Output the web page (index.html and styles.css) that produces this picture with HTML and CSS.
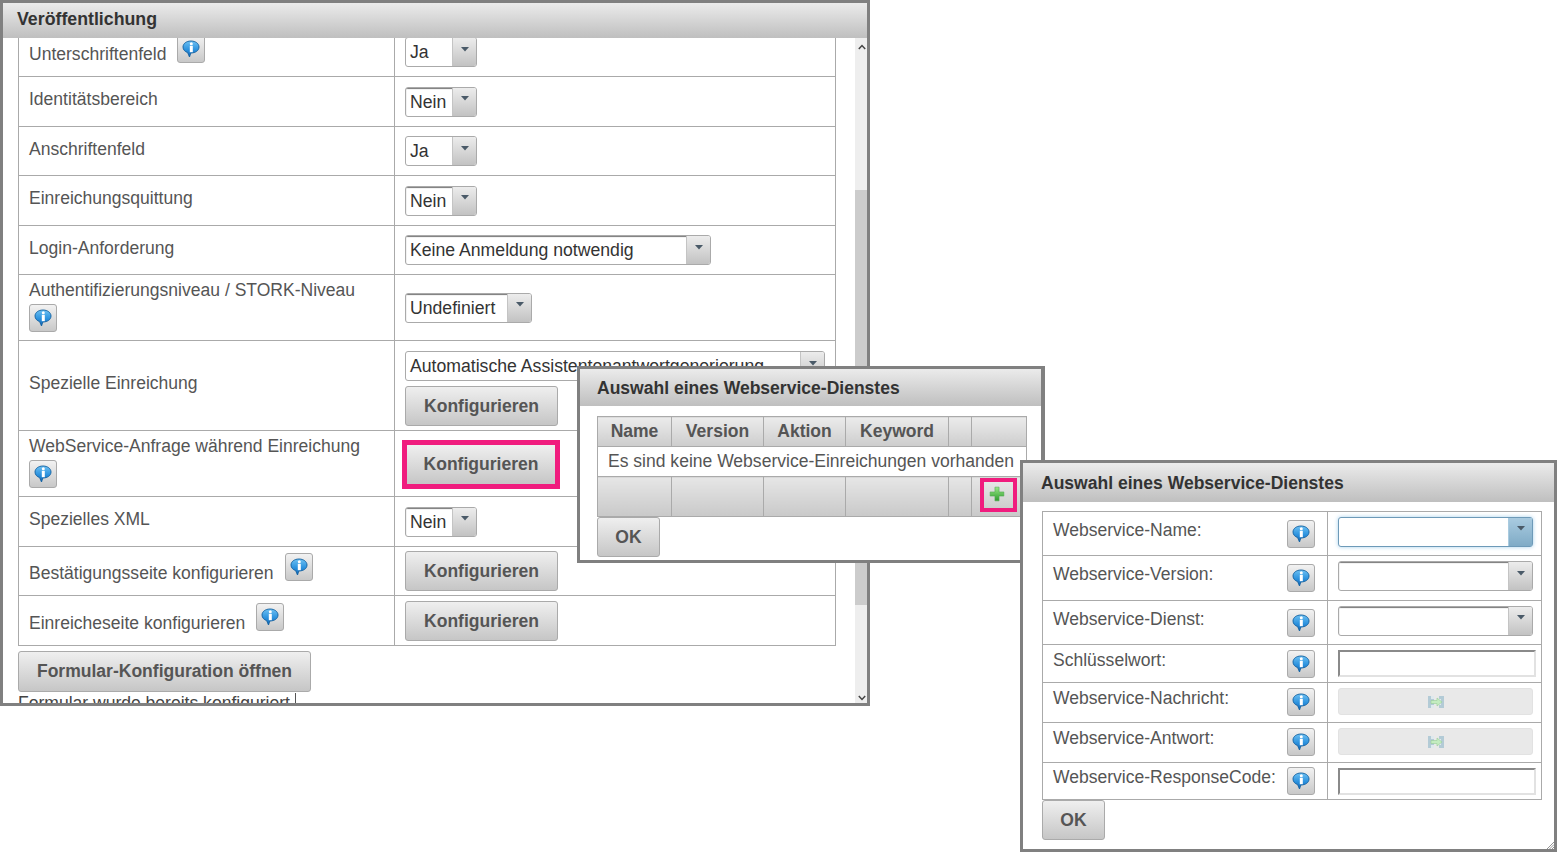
FILE: index.html
```html
<!DOCTYPE html>
<html lang="de">
<head>
<meta charset="utf-8">
<title>Veröffentlichung</title>
<link rel="stylesheet" href="styles.css">
</head>
<body>
<svg class="defs" aria-hidden="true">
  <defs>
    <linearGradient id="bub" x1="0" y1="0" x2="0" y2="1"><stop offset="0" stop-color="#6cc0f2"/><stop offset=".55" stop-color="#2c92de"/><stop offset="1" stop-color="#0e63b4"/></linearGradient>
    <linearGradient id="pl" x1="0" y1="0" x2="0" y2="1"><stop offset="0" stop-color="#9be888"/><stop offset="1" stop-color="#2c9a2c"/></linearGradient>
    <symbol id="info" viewBox="0 0 18 18">
      <path d="M9 1C4.400 1 1 3.600 1 7c0 2.700 2 4.700 4.600 5.600L7.500 17l1.300-4C13.500 13 17 10.600 17 7c0-3.400-3.400-6-8-6z" fill="url(#bub)" stroke="#12609f" stroke-width=".9"/>
      <circle cx="9.300" cy="3.700" r="1.500" fill="#fff"/>
      <rect x="7.800" y="5.800" width="3" height="6.400" fill="#fff"/>
    </symbol>
    <symbol id="plus" viewBox="0 0 14 14">
      <path d="M5.200 1h3.600v4.200H13v3.600H8.800V13H5.200V8.800H1V5.200h4.200z" fill="url(#pl)" stroke="#4da84d" stroke-width=".5"/>
    </symbol>
    <symbol id="transfer" viewBox="0 0 16 14">
      <path d="M0 1h6v12H0zM11 1h5v12h-5z" fill="#b3cbd6"/>
      <path d="M3 1h3v3H3zM3 10h3v3H3zM11 4h2v6h-2z" fill="#dfe9ed"/>
      <path d="M3 5.500h6V3l5 4-5 4V8.500H3z" fill="#c4ecc0" stroke="#98cf95" stroke-width=".6"/>
    </symbol>
    <symbol id="arrow" viewBox="0 0 8 5"><path d="M0 0h8L4 4.500z" fill="#4a5a68"/></symbol>
  </defs>
</svg>

<section class="win win-main">
  <h2 class="win-head">Veröffentlichung</h2>
  <div class="main-body">
    <div class="main-scroll">
      <table class="grid grid-main">
        <colgroup><col class="c-label"><col></colgroup>
        <tr class="h49">
          <td class="lab lab-first">Unterschriftenfeld <span class="info info-up"><svg><use href="#info"/></svg></span></td>
          <td class="val"><span class="combo w72"><span class="cv">Ja</span><span class="ca"><svg><use href="#arrow"/></svg></span></span></td>
        </tr>
        <tr class="h50">
          <td class="lab lab-high">Identitätsbereich</td>
          <td class="val"><span class="combo w72 inset"><span class="cv">Nein</span><span class="ca"><svg><use href="#arrow"/></svg></span></span></td>
        </tr>
        <tr class="h49">
          <td class="lab lab-mid">Anschriftenfeld</td>
          <td class="val"><span class="combo w72"><span class="cv">Ja</span><span class="ca"><svg><use href="#arrow"/></svg></span></span></td>
        </tr>
        <tr class="h50">
          <td class="lab lab-high">Einreichungsquittung</td>
          <td class="val"><span class="combo w72 inset"><span class="cv">Nein</span><span class="ca"><svg><use href="#arrow"/></svg></span></span></td>
        </tr>
        <tr class="h49">
          <td class="lab lab-mid">Login-Anforderung</td>
          <td class="val"><span class="combo w306 inset"><span class="cv">Keine Anmeldung notwendig</span><span class="ca"><svg><use href="#arrow"/></svg></span></span></td>
        </tr>
        <tr class="h66">
          <td class="lab lab-stack">Authentifizierungsniveau / STORK-Niveau<br><span class="info info-block"><svg><use href="#info"/></svg></span></td>
          <td class="val"><span class="combo w127 inset"><span class="cv">Undefiniert</span><span class="ca"><svg><use href="#arrow"/></svg></span></span></td>
        </tr>
        <tr class="h90">
          <td class="lab lab-raise">Spezielle Einreichung</td>
          <td class="val val-stack">
            <span class="combo w420"><span class="cv">Automatische Assistentenantwortgenerierung</span><span class="ca"><svg><use href="#arrow"/></svg></span></span>
            <span class="btn btn-conf btn-stack">Konfigurieren</span>
          </td>
        </tr>
        <tr class="h66">
          <td class="lab lab-stack">WebService-Anfrage während Einreichung<br><span class="info info-block"><svg><use href="#info"/></svg></span></td>
          <td class="val"><span class="mark mark-btn"><span class="btn btn-conf btn-flat">Konfigurieren</span></span></td>
        </tr>
        <tr class="h50">
          <td class="lab lab-high">Spezielles XML</td>
          <td class="val"><span class="combo w72 inset"><span class="cv">Nein</span><span class="ca"><svg><use href="#arrow"/></svg></span></span></td>
        </tr>
        <tr class="h49">
          <td class="lab lab-low">Bestätigungsseite konfigurieren <span class="info info-up2"><svg><use href="#info"/></svg></span></td>
          <td class="val"><span class="btn btn-conf">Konfigurieren</span></td>
        </tr>
        <tr class="h50">
          <td class="lab lab-low">Einreicheseite konfigurieren <span class="info info-up2"><svg><use href="#info"/></svg></span></td>
          <td class="val"><span class="btn btn-conf">Konfigurieren</span></td>
        </tr>
      </table>
      <span class="btn btn-open">Formular-Konfiguration öffnen</span>
      <div class="status">Formular wurde bereits konfiguriert</div>
    </div>
    <div class="scrollbar">
      <div class="sb-top"><svg viewBox="0 0 8 6"><path d="M.8 5 4 1.500 7.200 5" fill="none" stroke="#444" stroke-width="1.500"/></svg></div>
      <div class="sb-thumb"></div>
      <div class="sb-bottom"><svg viewBox="0 0 8 6"><path d="M.8 1 4 4.500 7.200 1" fill="none" stroke="#444" stroke-width="1.500"/></svg></div>
    </div>
  </div>
</section>

<section class="win win-list">
  <h2 class="win-head">Auswahl eines Webservice-Dienstes</h2>
  <div class="list-body">
    <table class="grid grid-list">
      <colgroup><col class="l1"><col class="l2"><col class="l3"><col class="l4"><col class="l5"><col></colgroup>
      <tr class="lh">
        <th>Name</th><th>Version</th><th>Aktion</th><th>Keyword</th><th></th><th></th>
      </tr>
      <tr class="lr"><td colspan="6">Es sind keine Webservice-Einreichungen vorhanden</td></tr>
      <tr class="lf">
        <td></td><td></td><td></td><td></td><td></td>
        <td><span class="mark mark-plus"><svg><use href="#plus"/></svg></span></td>
      </tr>
    </table>
    <span class="btn btn-ok">OK</span>
  </div>
</section>

<section class="win win-form">
  <h2 class="win-head">Auswahl eines Webservice-Dienstes</h2>
  <div class="form-body">
    <table class="grid grid-form">
      <colgroup><col class="f1"><col></colgroup>
      <tr class="r44">
        <td class="flab"><div class="fl"><span>Webservice-Name:</span><span class="info"><svg><use href="#info"/></svg></span></div></td>
        <td class="fval"><span class="combo wf focus"><span class="cv"></span><span class="ca"><svg><use href="#arrow"/></svg></span></span></td>
      </tr>
      <tr class="r45">
        <td class="flab"><div class="fl"><span>Webservice-Version:</span><span class="info"><svg><use href="#info"/></svg></span></div></td>
        <td class="fval"><span class="combo wf inset"><span class="cv"></span><span class="ca"><svg><use href="#arrow"/></svg></span></span></td>
      </tr>
      <tr class="r44">
        <td class="flab"><div class="fl"><span>Webservice-Dienst:</span><span class="info"><svg><use href="#info"/></svg></span></div></td>
        <td class="fval"><span class="combo wf inset"><span class="cv"></span><span class="ca"><svg><use href="#arrow"/></svg></span></span></td>
      </tr>
      <tr class="r38">
        <td class="flab"><div class="fl"><span>Schlüsselwort:</span><span class="info"><svg><use href="#info"/></svg></span></div></td>
        <td class="fval"><span class="tinput"></span></td>
      </tr>
      <tr class="r40">
        <td class="flab"><div class="fl fl-tight"><span>Webservice-Nachricht:</span><span class="info"><svg><use href="#info"/></svg></span></div></td>
        <td class="fval"><span class="disabled"><svg><use href="#transfer"/></svg></span></td>
      </tr>
      <tr class="r40">
        <td class="flab"><div class="fl fl-tight"><span>Webservice-Antwort:</span><span class="info"><svg><use href="#info"/></svg></span></div></td>
        <td class="fval"><span class="disabled"><svg><use href="#transfer"/></svg></span></td>
      </tr>
      <tr class="r37">
        <td class="flab"><div class="fl"><span>Webservice-ResponseCode:</span><span class="info"><svg><use href="#info"/></svg></span></div></td>
        <td class="fval"><span class="tinput"></span></td>
      </tr>
    </table>
    <span class="btn btn-ok">OK</span>
  </div>
  <svg class="grip" viewBox="0 0 8 8"><path d="M8 1 1 8M8 3.500 3.500 8M8 6 6 8" stroke="#777" stroke-width=".8"/></svg>
</section>
</body>
</html>
```

FILE: styles.css
```css
* { box-sizing: border-box; }
html, body { margin: 0; padding: 0; }
body {
  width: 1559px; height: 853px; position: relative; overflow: hidden;
  background: #fff; color: #555;
  font: 17.55px/21px "Liberation Sans", Arial, sans-serif;
}
.defs { position: absolute; width: 0; height: 0; }

/* windows on the canvas */
.win { position: absolute; background: #fff; border: 3px solid #808080; }
.win-main { left: 0; top: 0; width: 870px; height: 706px; display: flex; flex-direction: column; }
.win-list { left: 577px; top: 366px; width: 468px; height: 197px; border-right-width: 4px; }
.win-form { left: 1020px; top: 460px; width: 537px; height: 392px; }
.win-head {
  margin: 0; height: 35px; padding: 5px 14px 0;
  font-size: 17.55px; line-height: 22px; font-weight: bold; color: #333;
  background: linear-gradient(#ebebeb, #bfbfbf);
}
.win-main .win-head { font-size: 17.75px; }
.win-list .win-head, .win-form .win-head { height: 37px; padding: 8px 17px 0; }
.win-form .win-head { height: 39px; padding: 9px 18px 0; }

/* main window */
.main-body { flex: 1; display: flex; min-height: 0; overflow: hidden; }
.main-scroll { flex: 1; min-width: 0; padding-left: 15px; overflow: hidden; }
.scrollbar { width: 12px; flex: none; display: flex; flex-direction: column; background: #eee; }
.scrollbar svg { display: block; width: 8px; height: 6px; }
.sb-top { height: 152px; padding: 6px 0 0 3px; }
.sb-thumb { height: 415px; background: #ccc; }
.sb-bottom { flex: 1; display: flex; align-items: flex-end; padding: 0 0 2px 3px; }

/* tables */
.grid { border-collapse: collapse; table-layout: fixed; }
.grid td, .grid th { border: 1px solid #aaa; padding: 0; }
.grid-main { width: 818px; margin-top: -11px; }
.c-label { width: 376px; }
.h49 { height: 49px; } .h50 { height: 50px; } .h66 { height: 66px; } .h90 { height: 90px; }
.grid .lab { padding: 0 10px; vertical-align: middle; }
.grid .lab-high { padding-bottom: 5px; }
.grid .lab-mid { padding-bottom: 3px; }
.grid .lab-first { padding-top: 4px; }
.grid .lab-low { padding-top: 5px; }
.grid .lab-stack { padding-bottom: 3px; }
.grid .lab-raise { padding-bottom: 4px; }
.grid .val { padding: 0 10px; vertical-align: middle; }
.grid .val-stack { padding-top: 6px; }

/* combos */
.combo {
  display: inline-flex; height: 30px; vertical-align: middle; background: #fff;
  border: 1px solid #aaa; border-radius: 3px; overflow: hidden; color: #333; font-size: 17.65px;
}
.w72 { width: 72px; } .w127 { width: 127px; } .w306 { width: 306px; } .w420 { width: 420px; }
.wf { width: 195px; }
.cv { flex: 1; min-width: 0; padding: 4px 4px 0; white-space: nowrap; overflow: hidden; }
.ca {
  flex: none; width: 24px; display: flex; align-items: center; justify-content: center;
  padding-bottom: 6px; background: linear-gradient(#ececec, #c2c2c2); border-left: 1px solid #c4c4c4;
}
.ca svg { display: block; width: 8px; height: 5px; }
.inset .cv { box-shadow: inset 1px 2px 1px -1px #777; }
.focus { border-color: #6d9ab8; box-shadow: 0 0 4px #a9d2ec; overflow: visible; }
.focus .ca { background: linear-gradient(#a9cbe0, #7fabc6); border-left-color: #a9cbe0; }

/* buttons */
.btn {
  display: inline-block; text-align: center; font-weight: bold; color: #555;
  background: linear-gradient(#efefef, #c6c6c6); border: 1px solid #aaa; border-radius: 3px;
}
.btn-conf { width: 153px; height: 40px; line-height: 38px; vertical-align: middle; }
.btn-stack { display: block; margin-top: 5px; }
.btn-flat { display: block; border: 0; border-radius: 0; height: 39px; width: 148px; line-height: 39px; }
.btn-open { display: block; width: 293px; height: 41px; line-height: 38px; margin-top: 5px; }
.btn-ok { display: block; width: 63px; height: 40px; line-height: 38px; }
.mark { display: block; border: 5px solid #f01c7e; }
.mark-btn { width: 158px; height: 49px; margin: 2px 0 0 -3px; }
.mark-plus {
  width: 37px; height: 34px; border-width: 4px; margin: 1px auto 0 8px;
  display: flex; align-items: center; justify-content: center;
  background: linear-gradient(#e6e6e6, #cdcdcd);
}
.mark-plus svg { display: block; width: 16px; height: 16px; margin: 0 3px 2px 0; }

/* info button */
.info {
  display: inline-flex; align-items: center; justify-content: center;
  width: 28px; height: 28px; vertical-align: middle;
  background: linear-gradient(#f2f2f2, #c8c8c8); border: 1px solid #aaa; border-radius: 3px;
}
.info svg { display: block; width: 18px; height: 18px; }
.info-up { margin: -12px 0 0 6px; }
.info-up2 { margin: -14px 0 0 6px; }
.info-block { margin-top: 3px; }

/* status */
.status {
  display: inline-block; width: 278px; height: 22px; padding: 0; margin-top: 1px; color: #444;
  border-right: 1px solid #555; white-space: nowrap;
}

/* list dialog */
.list-body { padding: 10px 17px 0; }
.grid-list { width: 430px; color: #555; }
.l1 { width: 74px; } .l2 { width: 92px; } .l3 { width: 82px; } .l4 { width: 103px; } .l5 { width: 23px; }
.lh { height: 30px; }
.lh th { background: linear-gradient(#ebebeb, #cdcdcd); font-weight: bold; color: #555; }
.lr { height: 30px; }
.grid-list .lr td { padding: 0 10px; white-space: nowrap; }
.lf { height: 40px; }
.lf td { background: linear-gradient(#e6e6e6, #c9c9c9); vertical-align: top; }

/* form dialog */
.form-body { padding: 9px 19px 0; }
.grid-form { width: 500px; }
.f1 { width: 285px; }
.r44 { height: 44px; } .r45 { height: 45px; } .r38 { height: 38px; } .r40 { height: 40px; } .r37 { height: 37px; }
.grid .flab { padding: 0 12px 0 10px; }
.fl { display: flex; justify-content: space-between; align-items: flex-start; white-space: nowrap; }
.fl-tight { margin-bottom: 2px; }
.grid .fval { padding: 0 10px; }
.fval .combo { display: flex; margin-bottom: 4px; }
.tinput {
  display: block; width: 198px; height: 27px; background: #fff;
  border: 2px solid #e2e2e2; border-top-color: #8a8a8a; border-left-color: #8a8a8a;
}
.disabled {
  display: flex; align-items: center; justify-content: center; width: 195px; height: 27px; margin-bottom: 2px;
  background: #e9e9e9; border: 1px solid #e2e2e2; border-radius: 3px;
}
.disabled svg { display: block; width: 16px; height: 14px; }
.grip { position: absolute; right: 0; bottom: 0; width: 8px; height: 8px; }
```
